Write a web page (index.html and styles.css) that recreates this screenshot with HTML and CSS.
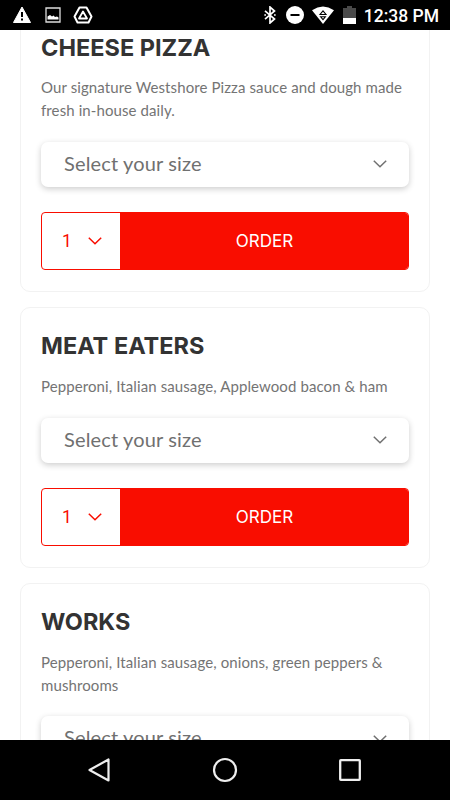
FILE: index.html
```
<!DOCTYPE html>
<html lang="en">
<head>
<meta charset="utf-8">
<title>Menu</title>
<link rel="stylesheet" href="styles.css">
</head>
<body>
<svg class="defs" aria-hidden="true">
  <symbol id="chevron" viewBox="0 0 14 8"><path d="M.8.8 7 6.7 13.2.8" fill="none" stroke="currentColor" stroke-width="1.5"/></symbol>
</svg>
<div class="screen">
  <header class="status">
    <div class="status-left">
      <svg width="20" height="18" viewBox="0 0 20 18"><path d="M10 1 18.500 16.500h-17Z" fill="#fff" stroke="#fff" stroke-linejoin="round"/><path d="M10 6v5M10 12.4v2.200" stroke="#000" stroke-width="2"/></svg>
      <svg width="16" height="16" viewBox="0 0 16 16"><path d="M1 1h14v14H1Z" fill="none" stroke="#ddd" stroke-width="1.300"/><path d="M2.500 12.500V9.500l2.500-1.500 2 1.500 1.500-1 1.500 1.500 2-.5 1.500 1v2Z" fill="#fff"/></svg>
      <svg width="20" height="18" viewBox="0 0 20 18"><path d="M6.500 1.500h7l5 9-3 6h-11l-3-6Z" fill="none" stroke="#fff" stroke-width="2" stroke-linejoin="round"/><path d="M10 5.500 14 12.500H6Z" fill="none" stroke="#fff" stroke-width="1.800" stroke-linejoin="round"/></svg>
    </div>
    <div class="status-right">
      <svg class="bluetooth" width="12" height="18" viewBox="0 0 12 18"><path d="M1 4.800 10.500 13 6 17V1l4.500 4L1 13.200" fill="none" stroke="#fff" stroke-width="1.700"/><path d="M.3 9h1.700M10 9h1.700" stroke="#fff" stroke-width="1.600"/></svg>
      <svg class="dnd" width="18" height="18" viewBox="0 0 18 18"><circle cx="9" cy="9" r="9" fill="#fff"/><path d="M4.500 9h9" stroke="#000" stroke-width="2"/></svg>
      <svg class="wifi" width="22" height="18" viewBox="0 0 22 18"><path d="M0 4.200Q11-3.200 22 4.200L11 18Z" fill="#fff"/><path d="M11 4.800 14 8.500H8Z" fill="none" stroke="#000" stroke-width="1.100"/><path d="M7.500 10.200h7L11 14.500Z" fill="#000"/><path d="M9.800 11.200h2.400L11 12.700Z" fill="#fff"/></svg>
      <svg class="battery" width="13" height="18" viewBox="0 0 13 18"><path d="M0 2h4V0h5v2h4v10H0Z" fill="#4a4a4a"/><path d="M0 12h13v6H0Z" fill="#fff"/></svg>
      <span class="clock">12:38 PM</span>
    </div>
  </header>

  <main class="menu">
    <article class="card">
      <h2 class="title">CHEESE PIZZA</h2>
      <p class="desc">Our signature Westshore Pizza sauce and dough made<br>fresh in-house daily.</p>
      <div class="size"><span>Select your size</span><svg class="chevron"><use href="#chevron"/></svg></div>
      <div class="order"><div class="qty"><span>1</span><svg class="chevron"><use href="#chevron"/></svg></div><div class="buy">ORDER</div></div>
    </article>
    <article class="card">
      <h2 class="title">MEAT EATERS</h2>
      <p class="desc">Pepperoni, Italian sausage, Applewood bacon &amp; ham</p>
      <div class="size"><span>Select your size</span><svg class="chevron"><use href="#chevron"/></svg></div>
      <div class="order"><div class="qty"><span>1</span><svg class="chevron"><use href="#chevron"/></svg></div><div class="buy">ORDER</div></div>
    </article>
    <article class="card">
      <h2 class="title">WORKS</h2>
      <p class="desc">Pepperoni, Italian sausage, onions, green peppers &amp;<br>mushrooms</p>
      <div class="size"><span>Select your size</span><svg class="chevron"><use href="#chevron"/></svg></div>
    </article>
  </main>

  <nav class="nav">
    <svg width="24" height="26" viewBox="0 0 24 26"><path d="M21.500 2.500v21L2.500 13Z" fill="none" stroke="#eee" stroke-width="2.200" stroke-linejoin="round"/></svg>
    <svg width="26" height="26" viewBox="0 0 26 26"><circle cx="13" cy="13" r="11" fill="none" stroke="#eee" stroke-width="2.200"/></svg>
    <svg width="24" height="24" viewBox="0 0 24 24"><rect x="2.200" y="2.200" width="19.600" height="19.600" rx=".6" fill="none" stroke="#eee" stroke-width="2.300"/></svg>
  </nav>
</div>
</body>
</html>
```

FILE: styles.css
```
* { box-sizing: border-box; }
body { margin: 0; background: #fff; font-family: Lato, sans-serif; color: #666; }
.defs { display: none; }
.screen { width: 450px; height: 800px; display: flex; flex-direction: column; overflow: hidden; }

.status {
  flex: 0 0 30px; background: #000; color: #fff;
  display: flex; justify-content: space-between; align-items: center;
  padding: 0 11px 0 12px;
}
.status-left { display: flex; align-items: center; gap: 12.5px; }
.status-right { display: flex; align-items: center; }
.bluetooth { margin-right: 10px; }
.dnd { margin-right: 8px; }
.wifi { margin-right: 8.5px; }
.battery { margin-right: 8px; }
.clock { font: 500 17.5px/28px Roboto, sans-serif; padding-top: 2px; }

.menu { flex: 1; min-height: 0; overflow: hidden; padding: 0 20px; }
.card {
  height: 261px; margin-bottom: 15.2px; padding: 20.2px 20px;
  border: 1px solid #f2f2f2; border-radius: 10px;
}
.card:first-child { height: 283.4px; margin-top: -21.6px; }
.card:last-child { height: 283.4px; }
.title { margin: 0; font: 700 23.5px/36px Inter, sans-serif; color: #333; }
.desc { margin: 10.8px 0 20.5px; font-size: 15px; line-height: 22.4px; letter-spacing: .1px; color: #747474; white-space: nowrap; }
.size {
  height: 45px; margin-bottom: 25px; padding: 0 22px 0 23px;
  display: flex; align-items: center; justify-content: space-between;
  border-radius: 7px; background: #fff; box-shadow: 0 2px 6px rgba(0, 0, 0, .2);
  font-size: 20px; letter-spacing: .15px; color: #707070;
}
.size span { padding-bottom: 3.4px; }
.chevron { display: block; width: 14px; height: 8px; }
.order { height: 58.4px; display: flex; border: 1px solid #f90d00; border-radius: 4px; overflow: hidden; }
.qty {
  flex: 0 0 78px; padding: 0 18px 0 20px;
  display: flex; align-items: center; justify-content: space-between;
  font: 400 17.5px Roboto, sans-serif; color: #f90d00;
}
.buy {
  flex: 1; display: flex; align-items: center; justify-content: center;
  padding-left: 1px;
  background: #f90d00; color: #fff; font: 400 17px Inter, sans-serif;
}

.nav { flex: 0 0 60px; background: #000; display: flex; align-items: center; justify-content: space-between; padding: 0 88px 0 87px; }
```
